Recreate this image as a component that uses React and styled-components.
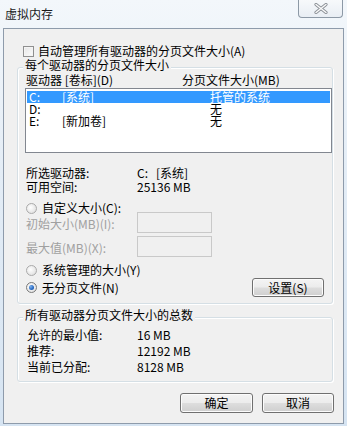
import React from 'react';
import styled, { createGlobalStyle } from 'styled-components';

const GlobalStyle = createGlobalStyle`
  html, body {
    margin: 0;
    padding: 0;
  }
  body {
    font-family: "Noto Sans CJK SC", "Noto Sans", sans-serif;
    font-size: 12px;
    color: #000;
  }
`;

const Frame = styled.div`
  width: 347px;
  height: 426px;
  box-sizing: border-box;
  background: linear-gradient(180deg, #f3f7fb 0%, #e4edf6 40%, #d6e4f2 100%);
  display: flex;
  flex-direction: column;
  overflow: hidden;
`;

const TitleBar = styled.div`
  height: 28px;
  display: flex;
  justify-content: space-between;
  align-items: flex-start;
  padding: 0 4px 0 5px;
  flex-shrink: 0;
`;

const Title = styled.div`
  align-self: center;
  line-height: 14px;
  font-size: 12px;
  color: #1a1a1a;
`;

const CloseButton = styled.div`
  width: 45px;
  height: 18px;
  box-sizing: border-box;
  border: 1px solid #8d99a6;
  border-top: none;
  border-radius: 0 0 4px 4px;
  background: linear-gradient(180deg, #f7f9fb 0%, #e9eef4 100%);
  display: flex;
  align-items: center;
  justify-content: center;
`;

const Panel = styled.div`
  margin: 0 3px 0 3px;
  height: 396px;
  box-sizing: border-box;
  border: 1px solid #8e9bab;
  background: #f0f0f0;
  display: flex;
  flex-direction: column;
`;

const CheckRow = styled.label`
  display: flex;
  align-items: center;
  gap: 4px;
  height: 14px;
  line-height: 14px;
  margin: 15px 0 0 19px;
`;

const CheckBox = styled.span`
  width: 11px;
  height: 11px;
  box-sizing: border-box;
  border: 1px solid #8f8f8f;
  background: linear-gradient(135deg, #e6e6e6 0%, #fbfbfb 100%);
  box-shadow: inset 0 0 0 1px #f4f4f4;
`;

const Group = styled.div`
  margin: ${({ $top }) => $top}px 10px 0 13px;
  border: 1px solid #d5dfe5;
  border-radius: 3px;
  box-shadow: inset 1px 1px 0 #fff, 1px 1px 0 #fff;
  padding: 0 0 6px 0;
  display: flex;
  flex-direction: column;
`;

const Legend = styled.div`
  align-self: flex-start;
  margin: -10px 0 0 5px;
  padding: 0 2px;
  line-height: 14px;
  background: #f0f0f0;
`;

const HeaderRow = styled.div`
  display: grid;
  grid-template-columns: 156px 1fr;
  margin: 1px 0 0 8px;
  line-height: 14px;
  white-space: pre;
`;

const ListBox = styled.div`
  margin: 1px 0 0 7px;
  height: 65px;
  box-sizing: border-box;
  border: 1px solid #828790;
  background: #fff;
  padding: 2px 1px;
`;

const ListRow = styled.div`
  display: grid;
  grid-template-columns: 33px 148px 1fr;
  height: 12px;
  line-height: 12px;
  padding-left: 2px;
  background: ${({ $selected }) => ($selected ? '#3399ff' : 'transparent')};
  color: ${({ $selected }) => ($selected ? '#fff' : '#000')};
`;

const InfoRow = styled.div`
  display: grid;
  grid-template-columns: ${({ $col }) => $col || 111}px 1fr;
  margin: ${({ $top }) => $top || 0}px 0 0 ${({ $left }) => $left || 8}px;
  height: ${({ $h }) => $h || 14}px;
  line-height: ${({ $h }) => $h || 14}px;
  white-space: pre;
`;

const RadioRow = styled.div`
  display: flex;
  align-items: center;
  gap: 5px;
  margin: ${({ $top }) => $top}px 0 0 8px;
  height: ${({ $h }) => $h || 14}px;
  line-height: 14px;
`;

const Radio = styled.span`
  width: 11px;
  height: 11px;
  box-sizing: border-box;
  border-radius: 50%;
  border: 1px solid ${({ $checked }) => ($checked ? '#7a7a7a' : '#aaaaaa')};
  background: radial-gradient(circle at 40% 40%, #ffffff 0%, #e4e4e4 70%, #d2d2d2 100%);
  display: flex;
  align-items: center;
  justify-content: center;

  &::after {
    content: '';
    display: ${({ $checked }) => ($checked ? 'block' : 'none')};
    width: 5px;
    height: 5px;
    border-radius: 50%;
    background: radial-gradient(circle at 35% 35%, #7fb2ec 0%, #2a6cc4 55%, #17499a 100%);
  }
`;

const InputRow = styled.div`
  display: grid;
  grid-template-columns: 111px 75px;
  align-items: center;
  margin: ${({ $top }) => $top}px 0 0 8px;
  height: 21px;
  color: #a0a0a0;
`;

const TextInput = styled.div`
  height: 21px;
  box-sizing: border-box;
  border: 1px solid #c9c9c9;
  background: #f0f0f0;
`;

const Label = styled.span`
  padding-top: 3px;
  line-height: 14px;
`;

const SettingsRow = styled.div`
  display: flex;
  align-items: center;
  justify-content: space-between;
  margin: 1px 8px 0 8px;
  height: 19px;
`;

const RadioLabel = styled.div`
  display: flex;
  align-items: center;
  gap: 5px;
  line-height: 14px;
`;

const Button = styled.div`
  width: ${({ $w }) => $w}px;
  height: ${({ $h }) => $h || 20}px;
  box-sizing: border-box;
  border: 1px solid #707070;
  border-radius: 3px;
  background: linear-gradient(180deg, #f4f4f4 0%, #ececec 48%, #dddddd 52%, #cfcfcf 100%);
  box-shadow: inset 0 0 0 1px #fcfcfc;
  display: flex;
  align-items: center;
  justify-content: center;
  line-height: 14px;
`;

const ButtonBar = styled.div`
  display: flex;
  justify-content: flex-end;
  gap: 9px;
  margin: 11px 9px 0 0;
`;

const CloseIcon = () => (
  <svg width="14" height="11" viewBox="0 0 14 11">
    <path d="M2 1.5 L12 9.5 M12 1.5 L2 9.5" stroke="#8a8f96" strokeWidth="3.2" strokeLinecap="round" />
    <path d="M2 1.5 L12 9.5 M12 1.5 L2 9.5" stroke="#fbfbfb" strokeWidth="1.4" strokeLinecap="round" />
  </svg>
);

const drives = [
  { letter: 'C:', label: '[系统]', size: '托管的系统', selected: true },
  { letter: 'D:', label: '', size: '无' },
  { letter: 'E:', label: '[新加卷]', size: '无' },
];

const totals = [
  ['允许的最小值:', '16 MB'],
  ['推荐:', '12192 MB'],
  ['当前已分配:', '8128 MB'],
];

const App = () => {
  return (
    <>
      <GlobalStyle />
      <Frame>
        <TitleBar>
          <Title>虚拟内存</Title>
          <CloseButton>
            <CloseIcon />
          </CloseButton>
        </TitleBar>
        <Panel>
          <CheckRow>
            <CheckBox />
            自动管理所有驱动器的分页文件大小(A)
          </CheckRow>

          <Group $top={9}>
            <Legend>每个驱动器的分页文件大小</Legend>
            <HeaderRow>
              <span>驱动器 [卷标](D)</span>
              <span>分页文件大小(MB)</span>
            </HeaderRow>
            <ListBox>
              {drives.map((d) => (
                <ListRow key={d.letter} $selected={d.selected}>
                  <span>{d.letter}</span>
                  <span>{d.label}</span>
                  <span>{d.size}</span>
                </ListRow>
              ))}
            </ListBox>

            <InfoRow $top={13}>
              <span>所选驱动器:</span>
              <span>C:   [系统]</span>
            </InfoRow>
            <InfoRow>
              <span>可用空间:</span>
              <span>25136 MB</span>
            </InfoRow>

            <RadioRow $top={8} $h={12}>
              <Radio />
              自定义大小(C):
            </RadioRow>
            <InputRow $top={-2}>
              <Label>初始大小(MB)(I):</Label>
              <TextInput />
            </InputRow>
            <InputRow $top={3}>
              <Label>最大值(MB)(X):</Label>
              <TextInput />
            </InputRow>

            <RadioRow $top={6}>
              <Radio />
              系统管理的大小(Y)
            </RadioRow>
            <SettingsRow>
              <RadioLabel>
                <Radio $checked />
                无分页文件(N)
              </RadioLabel>
              <Button $w={72} $h={19}>设置(S)</Button>
            </SettingsRow>
          </Group>

          <Group $top={13}>
            <Legend>所有驱动器分页文件大小的总数</Legend>
            {totals.map(([k, v], i) => (
              <InfoRow key={k} $top={i === 0 ? 5 : 0} $left={9} $col={110} $h={16}>
                <span>{k}</span>
                <span>{v}</span>
              </InfoRow>
            ))}
          </Group>

          <ButtonBar>
            <Button $w={73}>确定</Button>
            <Button $w={72}>取消</Button>
          </ButtonBar>
        </Panel>
      </Frame>
    </>
  );
};

export default App;
